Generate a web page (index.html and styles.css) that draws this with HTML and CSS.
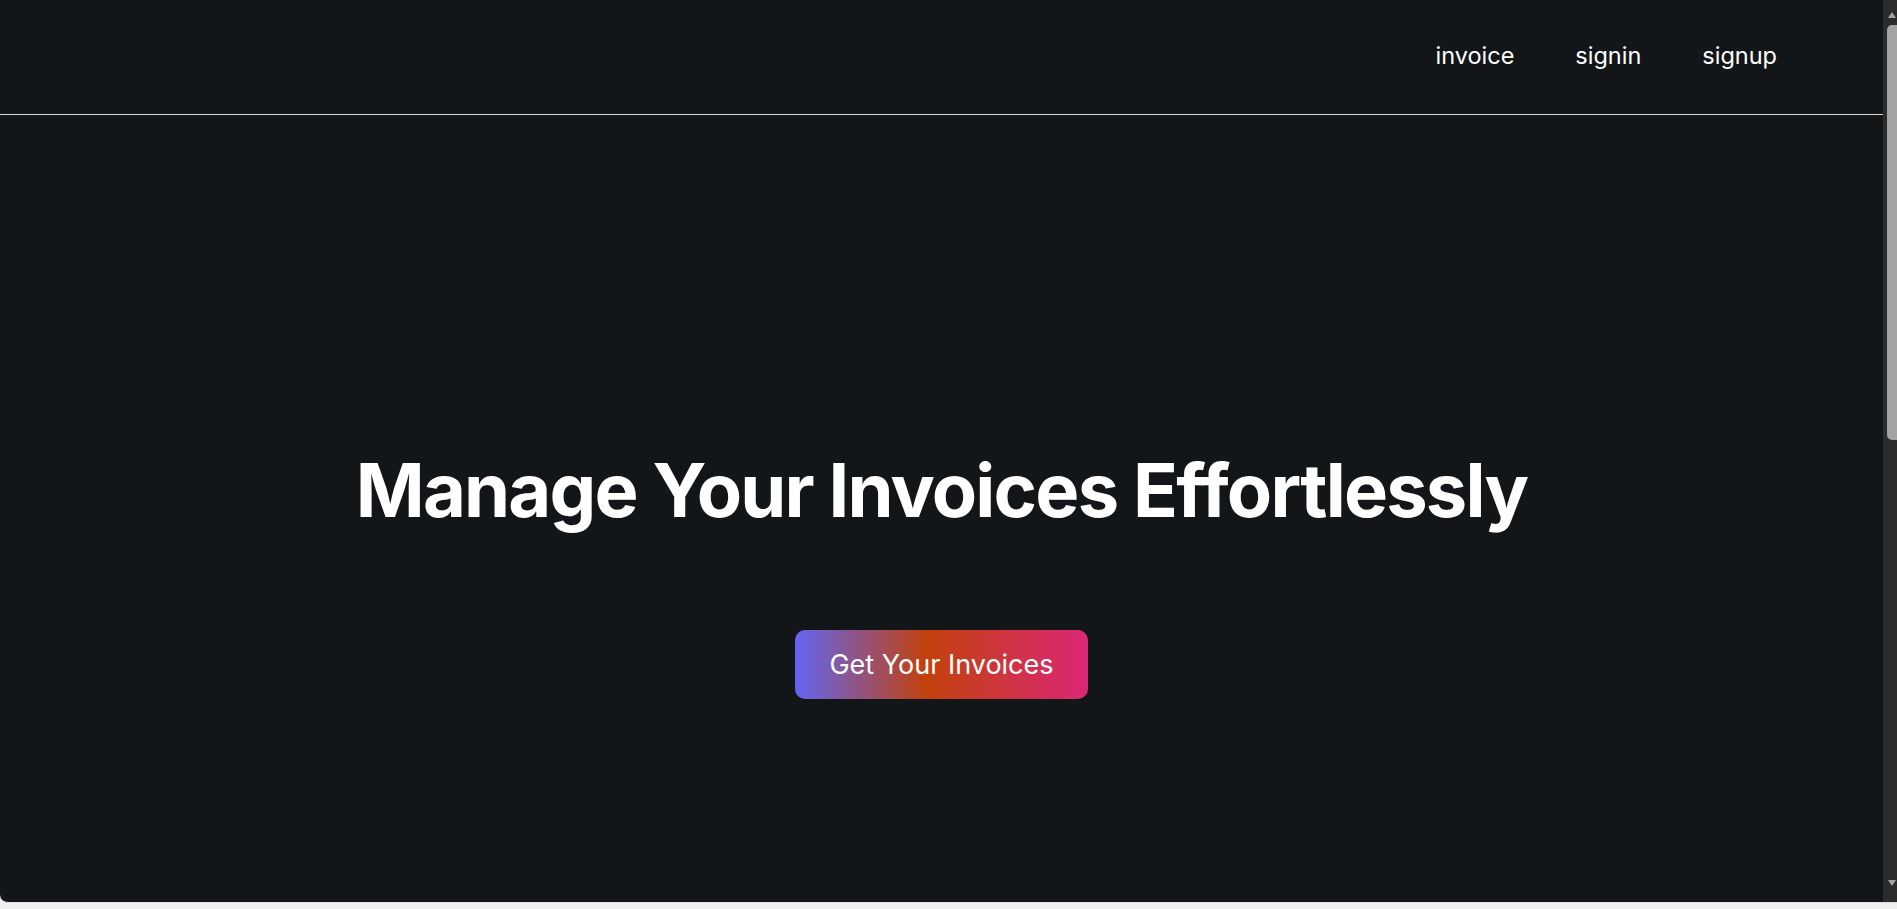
FILE: index.html
```html
<!DOCTYPE html>
<html lang="en">
<head>
<meta charset="utf-8">
<title>Invoices</title>
<link rel="stylesheet" href="styles.css">
</head>
<body>
<div class="window">
  <div class="page">
    <header class="topbar">
      <nav class="nav">
        <a class="nav-link" href="#">invoice</a>
        <a class="nav-link" href="#">signin</a>
        <a class="nav-link" href="#">signup</a>
      </nav>
    </header>
    <main class="hero">
      <h1 class="hero-title">Manage Your Invoices Effortlessly</h1>
      <a class="cta" href="#">Get Your Invoices</a>
    </main>
  </div>
  <div class="scrollbar" aria-hidden="true">
    <span class="arrow arrow-up"></span>
    <span class="thumb"></span>
    <span class="track"></span>
    <span class="arrow arrow-down"></span>
  </div>
</div>
</body>
</html>
```
FILE: styles.css
```css
html, body {
  margin: 0;
  padding: 0;
  background: #f0f0f0;
  color: #ffffff;
  font-family: Inter, "Noto Sans", sans-serif;
  overflow: hidden;
}
.window {
  height: 903px;
  display: flex;
  background: #131619;
  border-bottom-left-radius: 8px;
  overflow: hidden;
  border-bottom: 1px solid #e2e2e2;
  box-sizing: border-box;
}
.page {
  flex: 1;
  min-width: 0;
}
.topbar {
  height: 114px;
  border-bottom: 1px solid #d9d9d9;
  display: flex;
  justify-content: flex-end;
  align-items: flex-start;
}
.nav {
  display: flex;
  gap: 61px;
  padding: 40px 106px 0 0;
}
.nav-link {
  color: #ffffff;
  text-decoration: none;
  font-size: 23.5px;
  line-height: 32px;
}
.hero {
  display: flex;
  flex-direction: column;
  align-items: center;
  padding-top: 330px;
}
.hero-title {
  margin: 0;
  font-size: 74px;
  font-weight: 700;
  line-height: 90px;
  letter-spacing: -1.8px;
}
.cta {
  margin-top: 95px;
  width: 293px;
  height: 69px;
  border-radius: 10px;
  display: flex;
  align-items: center;
  justify-content: center;
  color: #ffffff;
  text-decoration: none;
  font-size: 27px;
  background: linear-gradient(to right, #6366f1, #c2410c 45%, #db2777);
}
.scrollbar {
  flex: 0 0 14px;
  width: 14px;
  background: #2c2c2c;
  display: flex;
  flex-direction: column;
  align-items: center;
  padding: 12px 0 16px 4px;
  box-sizing: border-box;
}
.arrow {
  flex: none;
  width: 0;
  height: 0;
  border-left: 4.5px solid transparent;
  border-right: 4.5px solid transparent;
}
.arrow-up {
  border-bottom: 6px solid #a3a3a3;
}
.arrow-down {
  border-top: 6px solid #a3a3a3;
}
.thumb {
  flex: none;
  margin-top: 7px;
  width: 10px;
  height: 415px;
  border-radius: 5px 0 0 5px;
  background: #a3a3a3;
}
.track {
  flex: 1;
}
```
